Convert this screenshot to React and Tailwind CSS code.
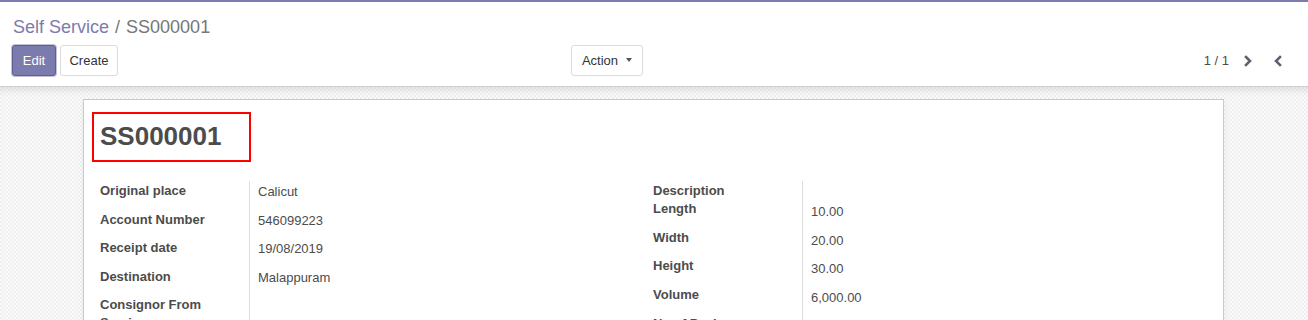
import React from "react";

const Chevron = ({ dir }) => (
  <svg width="10" height="12" viewBox="0 0 10 12" className="text-[#5f5f6e]">
    {dir === "right" ? (
      <polyline points="3,2 7,6 3,10" fill="none" stroke="currentColor" strokeWidth="2.6" strokeLinecap="square" />
    ) : (
      <polyline points="7,2 3,6 7,10" fill="none" stroke="currentColor" strokeWidth="2.6" strokeLinecap="square" />
    )}
  </svg>
);

const leftRows = [
  ["Original place", "Calicut"],
  ["Account Number", "546099223"],
  ["Receipt date", "19/08/2019"],
  ["Destination", "Malappuram"],
  ["Consignor From Service", ""],
];

const rightRows = [
  ["Length", "10.00"],
  ["Width", "20.00"],
  ["Height", "30.00"],
  ["Volume", "6,000.00"],
  ["No of Packages", ""],
];

export default function App() {
  return (
    <div className="w-[1308px] h-[320px] overflow-hidden bg-white font-['Liberation_Sans',Arial,sans-serif] text-[#4c4c4c] border-t-2 border-[#7c7bad]">
      {/* control panel */}
      <div className="px-3 pt-[14px] pb-[10px] border-b border-[#d0d0d0]">
        <div className="h-[22px] leading-[22px] text-[18px] flex items-center pl-[1px]">
          <span className="text-[#7c7bad]">Self Service</span>
          <span className="text-[#777] mx-[6px]">/</span>
          <span className="text-[#777]">SS000001</span>
        </div>
        <div className="mt-[7px] flex items-center h-[31px]">
          <button className="h-[31px] w-[44px] rounded-[3px] bg-[#7c7bad] border border-[#5f5e92] text-white text-[13px] shadow-[0_0_0_1px_rgba(124,123,173,0.45)]">
            Edit
          </button>
          <button className="ml-[4px] h-[31px] w-[58px] rounded-[3px] bg-white border border-[#dcdcdc] text-[#333] text-[13px]">
            Create
          </button>
          <button className="ml-[453px] h-[31px] w-[72px] rounded-[3px] bg-white border border-[#dcdcdc] text-[#333] text-[13px] flex items-center justify-center gap-[8px]">
            Action
            <span className="w-0 h-0 border-l-[3px] border-r-[3px] border-t-[4px] border-l-transparent border-r-transparent border-t-[#555] mb-[1px]"></span>
          </button>
          <div className="ml-auto flex items-center text-[13px] text-[#4c4c4c]">
            <span className="mr-[9px]">1 / 1</span>
            <span className="w-[20px] flex justify-center"><Chevron dir="right" /></span>
            <span className="ml-[10px] w-[20px] flex justify-center mr-[8px]"><Chevron dir="left" /></span>
          </div>
        </div>
      </div>

      {/* content */}
      <div className="h-[240px] pt-[12px] bg-[repeating-conic-gradient(#efefef_0%_25%,#fbfbfb_0%_50%)] bg-[length:4px_4px] shadow-[inset_0_8px_8px_-6px_rgba(0,0,0,0.12)]">
        <div className="ml-[83px] w-[1141px] h-[300px] bg-white border border-[#c9c8d5] shadow-[0_2px_6px_rgba(0,0,0,0.06)] px-2 pt-[12px]">
          <div className="w-[159px] h-[50px] border-2 border-[#ff0000] flex items-center pl-[6px] pb-[2px]">
            <span className="text-[26px] font-bold text-[#4c4c4c] leading-none">SS000001</span>
          </div>

          <div className="mt-[19px] ml-2 grid grid-cols-[553px_554px] text-[13px]">
            {/* left group */}
            <div>
              {leftRows.map(([label, value]) => (
                <div key={label} className="flex h-[28.5px]">
                  <div className="w-[149px] pr-3 font-bold leading-[18px] pt-[1px]">{label}</div>
                  <div className="flex-1 border-l border-[#dddddd] pl-2 leading-[18px] pt-[2px]">{value}</div>
                </div>
              ))}
            </div>
            {/* right group */}
            <div>
              <div className="flex h-[18px]">
                <div className="w-[149px] font-bold leading-[18px] pt-[1px]">Description</div>
                <div className="flex-1 border-l border-[#dddddd]"></div>
              </div>
              {rightRows.map(([label, value]) => (
                <div key={label} className="flex h-[28.7px]">
                  <div className="w-[149px] pr-3 font-bold leading-[18px] pt-[1px]">{label}</div>
                  <div className="flex-1 border-l border-[#dddddd] pl-2 leading-[18px] pt-[4px]">{value}</div>
                </div>
              ))}
            </div>
          </div>
        </div>
      </div>
    </div>
  );
}
